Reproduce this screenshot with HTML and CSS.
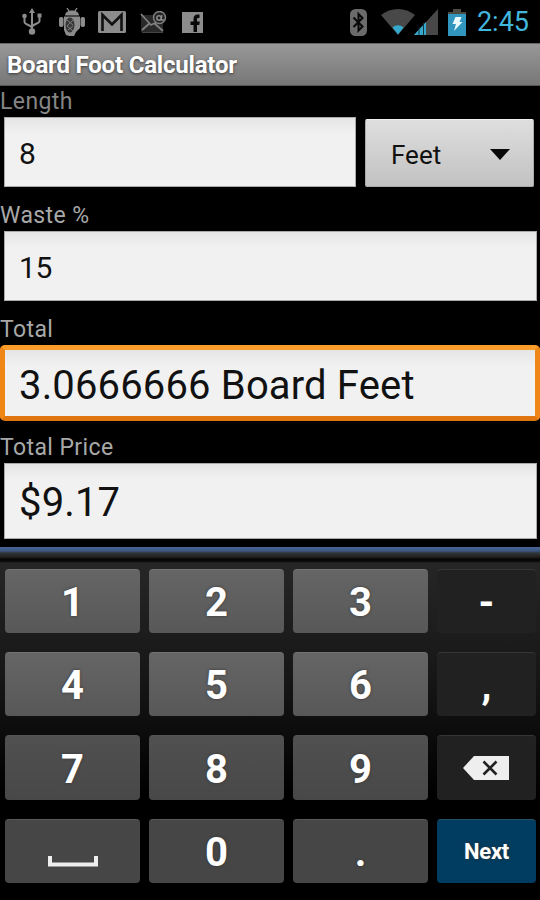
FILE: index.html
```
<!DOCTYPE html>
<html lang="en">
<head>
  <meta charset="UTF-8">
  <meta name="viewport" content="width=device-width, initial-scale=1.0">
  <title>Board Foot Calculator</title>
  <link rel="stylesheet" href="styles.css">
</head>
<body>
  <div class="status-bar">
    <div class="notifications">
      <!-- usb -->
      <svg width="20" height="28" viewBox="0 0 20 28" fill="none" stroke="#8c8c8c" stroke-width="2">
        <path d="M10 4v20M2.500 9v5c0 3 7.500 3 7.500 6M17.500 9v4c0 3-7.500 3-7.500 6"/>
        <path d="M10 0l3 5H7z" fill="#8c8c8c" stroke="none"/>
        <circle cx="10" cy="23.500" r="3.200" fill="#8c8c8c" stroke="none"/>
        <circle cx="2.500" cy="8" r="2.300" fill="#8c8c8c" stroke="none"/>
        <path d="M15.500 5.500h4v4h-4z" fill="#8c8c8c" stroke="none"/>
      </svg>
      <!-- android debugging -->
      <svg width="26" height="29" viewBox="0 0 26 29" fill="#8c8c8c">
        <path d="M6 7.500c0-3 3-5 7-5s7 2 7 5z"/>
        <path d="M8 0l2.500 4M18 0l-2.500 4" stroke="#8c8c8c" stroke-width="1.300"/>
        <rect x="0" y="9" width="4.500" height="10" rx="2"/>
        <rect x="21.500" y="9" width="4.500" height="10" rx="2"/>
        <path d="M5 8.500h16V20l-4 4-2 4h-5l-3-1-2-5z"/>
        <ellipse cx="11" cy="17" rx="4.500" ry="7.500" fill="#383838"/>
        <path d="M8 12l6 5M14 12l-6 6M8 18l6 5M14 18l-5 4" stroke="#8c8c8c" stroke-width=".8"/>
      </svg>
      <!-- gmail -->
      <svg width="28" height="22" viewBox="0 0 28 22">
        <rect width="28" height="22" rx="1.500" fill="#8c8c8c"/>
        <path d="M4.500 20V4L14 13.500 23.500 4v16" fill="none" stroke="#111" stroke-width="2.600"/>
      </svg>
      <!-- e-mail -->
      <svg width="28" height="23" viewBox="0 0 28 23" fill="none">
        <path d="M1 4h22v17H1z" fill="#292929"/>
        <path d="M1 3l10 11L23 8M2 19l8-7M14 12l9 8" stroke="#808080" stroke-width="1.800"/>
        <path d="M2 21.500h21" stroke="#444"/>
        <circle cx="19.500" cy="6.500" r="6" fill="#222" stroke="#808080" stroke-width="1.500"/>
        <circle cx="19" cy="7" r="2.200" stroke="#8c8c8c" stroke-width="1.500"/>
        <path d="M22 4l-.8 5h3" stroke="#8c8c8c" stroke-width="1.300"/>
      </svg>
      <!-- facebook -->
      <svg class="facebook" width="21" height="21" viewBox="0 0 21 21">
        <rect width="21" height="21" fill="#8c8c8c"/>
        <path d="M11.500 20v-7H8.500V9.500h3V7c0-3 1.500-4.500 4-4.500h2V6h-1.200C15.200 6 15 6.600 15 7.500v2h2.800l-.5 3.500H15v7z" fill="#080808"/>
      </svg>
    </div>
    <div class="system">
      <!-- bluetooth -->
      <svg width="17" height="27" viewBox="0 0 17 27">
        <rect width="17" height="27" rx="5.500" fill="#6b6b6b"/>
        <path d="M3.500 8.500l9 9-4 4V5l4 4-9 9" fill="none" stroke="#080808" stroke-width="2"/>
      </svg>
      <!-- wifi -->
      <svg class="wifi" width="34" height="26" viewBox="0 0 34 26">
        <path d="M0 6C10-2 24-2 34 6L17 26z" fill="#484848"/>
        <path d="M11.500 18.500c3.500-3 7.500-3 11 0L17 25.500z" fill="#35a9cc"/>
      </svg>
      <!-- signal -->
      <svg class="signal" width="24" height="26" viewBox="0 0 24 26">
        <path d="M0 26L24 0v26z" fill="#484848"/>
        <path d="M0 26l12-13v13z" fill="#35a9cc"/>
        <path d="M5 18v8M9.500 14v12" stroke="#12343e"/>
      </svg>
      <!-- battery -->
      <svg class="battery" width="18" height="27" viewBox="0 0 18 27">
        <path d="M5 0h8v3h5v3H0V3h5z" fill="#4b4b43"/>
        <path d="M0 5h18v22H0z" fill="#3196be"/>
        <path d="M7.500 8h6l-2 5h3L6 22l2-7H4.500z" fill="#e8faff"/>
      </svg>
      <span class="clock">2:45</span>
    </div>
  </div>

  <h1 class="title-bar">Board Foot Calculator</h1>

  <div class="form">
    <label class="label first" for="length">Length</label>
    <div class="row">
      <input class="field" id="length" type="text" value="8">
      <button class="spinner" type="button">
        <span>Feet</span>
        <svg width="20" height="11" viewBox="0 0 20 11"><path d="M0 0h20L10 11z" fill="#080808"/></svg>
      </button>
    </div>
    <label class="label" for="waste">Waste %</label>
    <input class="field" id="waste" type="text" value="15">
    <label class="label" for="total">Total</label>
    <input class="field large focused" id="total" type="text" value="3.0666666 Board Feet">
    <label class="label price-label" for="price">Total Price</label>
    <input class="field large" id="price" type="text" value="$9.17">
  </div>

  <div class="keyboard">
    <div class="keys">
      <button class="key">1</button>
      <button class="key">2</button>
      <button class="key">3</button>
      <button class="key dark">-</button>
      <button class="key">4</button>
      <button class="key">5</button>
      <button class="key">6</button>
      <button class="key dark">,</button>
      <button class="key row3">7</button>
      <button class="key row3">8</button>
      <button class="key row3">9</button>
      <button class="key dark" aria-label="Delete">
        <svg class="delete" width="46" height="24" viewBox="0 0 46 24">
          <path d="M0 12L11 0h35v24H11z" fill="#eee"/>
          <path d="M20.500 5.500l13 13M33.500 5.500l-13 13" stroke="#222" stroke-width="2.600"/>
        </svg>
      </button>
      <button class="key row4" aria-label="Space">
        <svg class="space" width="50" height="11" viewBox="0 0 50 11">
          <path d="M2 0v8.500h46V0" fill="none" stroke="#eee" stroke-width="4"/>
        </svg>
      </button>
      <button class="key row4">0</button>
      <button class="key row4">.</button>
      <button class="key next">Next</button>
    </div>
  </div>
</body>
</html>
```
FILE: styles.css
```
* {
  box-sizing: border-box;
}
body {
  margin: 0;
  width: 540px;
  height: 900px;
  overflow: hidden;
  background-color: #000;
  font-family: Roboto, sans-serif;
}
button, input {
  font-family: inherit;
  margin: 0;
}
svg {
  display: block;
  flex: none;
}
.status-bar {
  height: 43px;
  display: flex;
  justify-content: space-between;
  padding: 1px 11px 0 22px;
}
.notifications, .system {
  display: flex;
  align-items: center;
}
.notifications {
  gap: 14px;
}
.notifications svg:nth-child(2) {
  margin-left: 3px;
}
.notifications svg:nth-child(3) {
  margin-left: -1px;
}
.wifi {
  margin-left: 14px;
}
.signal {
  margin-left: -1px;
}
.battery {
  margin-left: 10px;
}
.clock {
  margin-left: 11px;
  font-size: 27px;
  line-height: 45px;
  color: #42b6dd;
}
.title-bar {
  height: 43px;
  margin: 0;
  padding-left: 7px;
  font-size: 24px;
  line-height: 43px;
  letter-spacing: -0.2px;
  font-weight: bold;
  color: #fff;
  text-shadow: 0 1px 3px #333;
  background: linear-gradient(#989898, #777);
  border-top: 1px solid #666;
  border-bottom: 1px solid #555;
}
.form {
  height: 461px;
  display: flex;
  flex-direction: column;
}
.label {
  height: 44px;
  padding: 14px 0 0;
  font-size: 23px;
  line-height: 30px;
  letter-spacing: 0.4px;
  color: #a8a8a8;
}
.label.first {
  height: 31px;
  padding-top: 1px;
  color: #858585;
}
.label.price-label {
  height: 42px;
  padding-top: 12px;
}
.row {
  display: flex;
  align-items: flex-end;
  gap: 9px;
}
.field {
  width: 533px;
  height: 70px;
  margin: 0 3px 0 4px;
  padding: 2px 14px 0;
  border: 1px solid #aaa;
  border-radius: 0;
  outline: none;
  background: linear-gradient(#e5e5e5, #f1f1f1 16px);
  font-size: 30px;
  letter-spacing: -0.3px;
  color: #111;
}
.row .field {
  width: 352px;
  margin-right: 0;
}
.field.large {
  height: 76px;
  font-size: 40px;
  letter-spacing: 0.15px;
}
.field.focused {
  width: 540px;
  margin: 0;
  padding: 4px 14px 0;
  border: 5px solid;
  border-color: #fa9d2a #ef8716 #df7610;
  border-radius: 5px;
}
.spinner {
  width: 169px;
  height: 68px;
  display: flex;
  align-items: center;
  justify-content: space-between;
  padding: 3px 23px 0 25px;
  border: 1px solid #aaa;
  border-top-color: #eee;
  border-radius: 2px;
  background: linear-gradient(#dedede, #c2c2c2);
  font-size: 26px;
  color: #111;
}
.keyboard {
  height: 353px;
  background: linear-gradient(#4a6598 0, #3d5680 4px, #2d3638 6px, #241f1d 10px, #070707 12px, #070707 14px, #262626 16px, #181818 120px, #000 250px);
}
.keys {
  display: grid;
  grid-template-columns: 135px 135px 135px 99px;
  grid-template-rows: 64px 64px 65px 64px;
  gap: 19px 9px;
  padding: 22px 5px 0;
}
.key {
  display: flex;
  align-items: center;
  justify-content: center;
  padding: 2px 0 0;
  border: 0;
  border-top: 1px solid #747474;
  border-radius: 4px;
  background: linear-gradient(#656565, #585858);
  font-size: 40px;
  font-weight: bold;
  color: #fff;
  text-shadow: 0 0 3px #333;
}
.key.row3 {
  background: linear-gradient(#505050, #484848);
  border-top-color: #555;
}
.key.row4 {
  background: #464646;
  border-top-color: #5a5a5a;
}
.key.dark {
  background: #212121;
  border-top-color: #363636;
}
.key.next {
  background: #003d60;
  border-top-color: #2a5068;
  padding: 0 0 1px;
  font-size: 22px;
  letter-spacing: -0.2px;
}
.delete {
  margin: -3px 2px 0 0;
}
.space {
  margin-top: 18px;
}
```
